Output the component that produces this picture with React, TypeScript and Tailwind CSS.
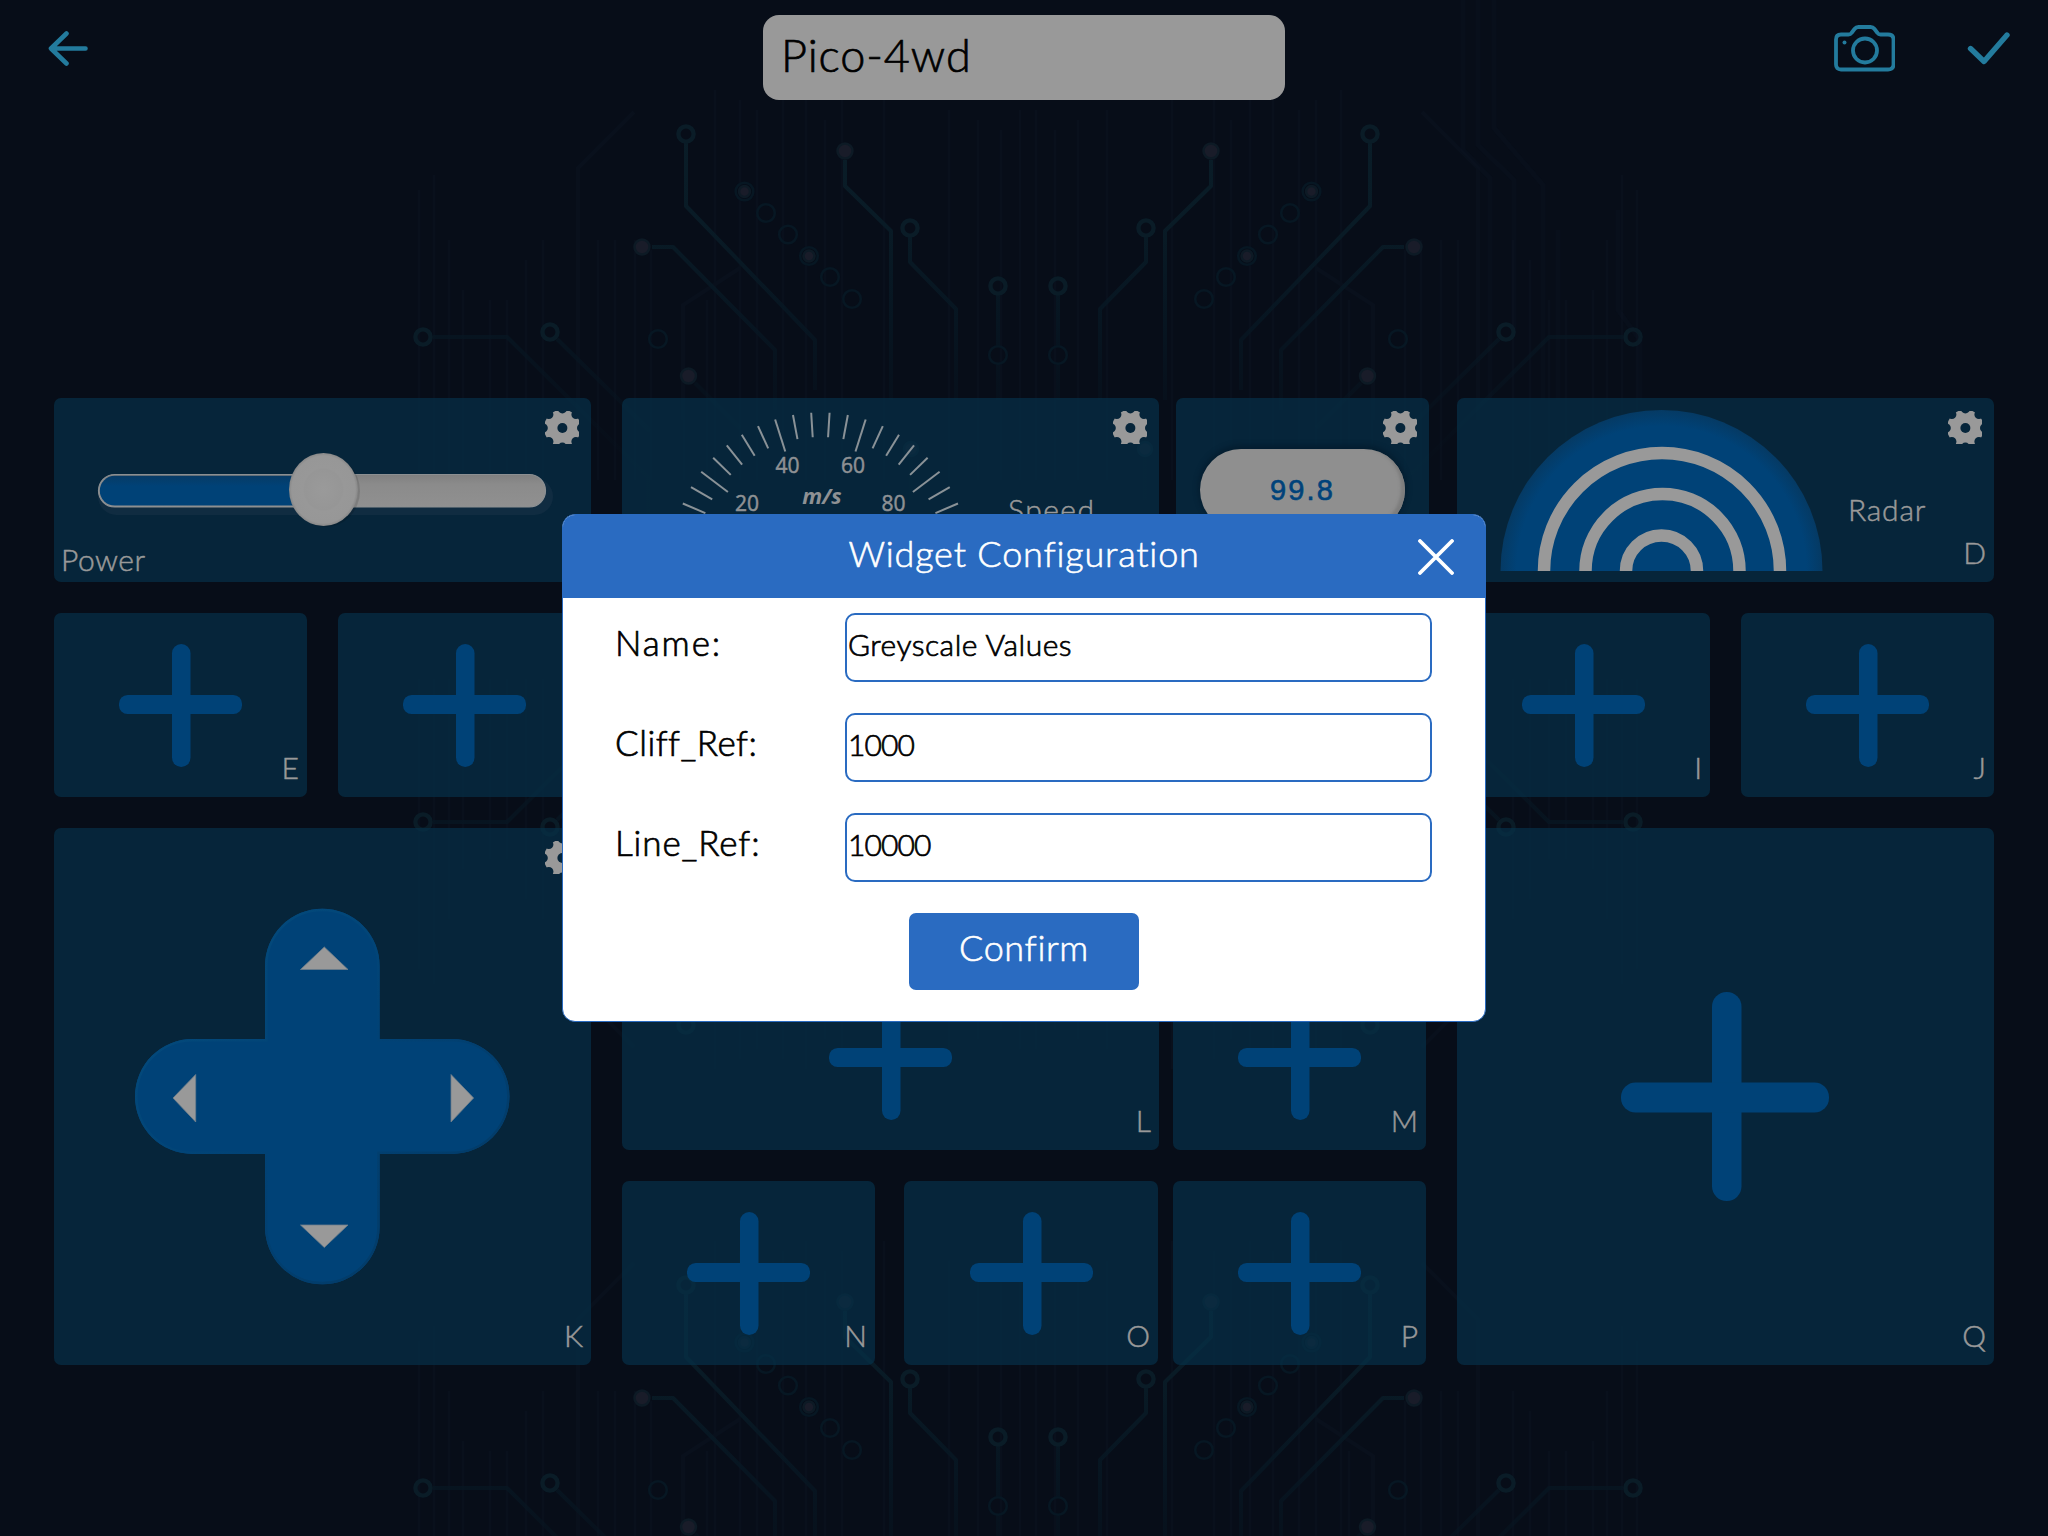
import React from "react";

const FONT = "font-['Lato','Liberation_Sans',sans-serif]";

/* ---------- background circuit board ---------- */

const traces = [
  "M686 143V206L815 340V390",
  "M845 160V186L891 231V400",
  "M910 237V262L956 309V400",
  "M998 295V346M998 364V400",
  "M652 247H673L775 350V410",
  "M433 337H507L648 477V560",
  "M557 339L617 398L650 431",
  "M695 383L740 428",
  "M911 458V500",
];
const rings: [number, number][] = [
  [686, 134], [910, 228], [998, 286], [423, 337], [550, 332],
];
const dimRings: [number, number][] = [
  [744.5, 191.5], [766, 213], [788, 234.5], [809, 256], [830, 277], [852, 299], [658, 339], [998, 355],
];
const dots: [number, number, number][] = [
  [845, 151, 7.5], [642, 247, 7.5], [688.5, 376, 7.5], [744.5, 191.5, 5.5], [809, 256, 5.5], [911, 449, 7],
];
const streaks: [number, number][] = [
  [419, 190], [434, 175], [449, 240], [463, 290], [490, 300], [507, 300], [526, 260], [543, 240], [598, 240],
  [615, 240], [635, 240], [651, 250], [684, 310], [707, 300], [715, 90], [740, 100], [757, 110], [783, 100],
  [806, 90], [825, 120], [842, 100], [884, 90], [949, 110], [978, 120], [1001, 130], [1020, 110],
];

function CircuitQuarter() {
  return (
    <g id="quarter" fill="none">
      <g stroke="#101c2c" strokeWidth="2.5" opacity="0.22">
        {streaks.map(([x, y]) => (
          <path key={x} d={`M${x} ${y}V480`} />
        ))}
        <path d="M634 112L578 168V420M740 268L683 305V420" strokeWidth="4" />
      </g>
      <g stroke="url(#traceFade)" strokeWidth="4" strokeLinejoin="round">
        {traces.map((d) => (
          <path key={d} d={d} />
        ))}
      </g>
      <g stroke="#0a1c27" strokeWidth="4.4">
        {rings.map(([x, y]) => (
          <circle key={`${x}-${y}`} cx={x} cy={y} r="7.6" />
        ))}
      </g>
      <g stroke="#071723" strokeWidth="2.6">
        {dimRings.map(([x, y]) => (
          <circle key={`${x}-${y}`} cx={x} cy={y} r="8.8" />
        ))}
      </g>
      <g fill="#191c29" stroke="#0d1a25" strokeWidth="2.5">
        {dots.map(([x, y, r]) => (
          <circle key={`${x}-${y}`} cx={x} cy={y} r={r} />
        ))}
      </g>
    </g>
  );
}

function Circuit() {
  return (
    <svg className="absolute inset-0" width="2048" height="1536" viewBox="0 0 2048 1536">
      <defs>
        <linearGradient id="traceFade" gradientUnits="userSpaceOnUse" x1="0" y1="120" x2="0" y2="460">
          <stop offset="0" stopColor="#0a1d28" />
          <stop offset="0.3" stopColor="#091b26" />
          <stop offset="0.6" stopColor="#071723" stopOpacity="0.8" />
          <stop offset="1" stopColor="#071420" stopOpacity="0.1" />
        </linearGradient>
        <CircuitQuarter />
        <g id="board">
          <use href="#quarter" />
          <use href="#quarter" transform="translate(2056 0) scale(-1 1)" />
        </g>
      </defs>
      <use href="#board" />
      <use href="#board" transform="translate(0 1159) scale(1 -1)" />
      <use href="#board" transform="translate(0 1151)" />
      <g fill="none" stroke="#0e1929" strokeWidth="5" opacity="0.2">
        <path d="M1463 0V150L1490 178V400M1478 0V145L1514 180V330M1494 0V128L1543 185V400M1558 230V400M1618 210V310L1640 340V400" />
      </g>
    </svg>
  );
}

/* ---------- widgets ---------- */

function Gear() {
  const notches = [0, 45, 90, 135, 180, 225, 270, 315];
  return (
    <svg className="absolute top-[13px] right-[12px]" width="34" height="33" viewBox="0 0 34 33">
      <defs>
        <mask id="gearMask" maskUnits="userSpaceOnUse" x="0" y="0" width="34" height="33">
          <circle cx="17.4" cy="17" r="18.4" fill="#fff" />
          {notches.map((a) => (
            <circle key={a} cx="17.4" cy="-2.2" r="4.6" fill="#000" transform={`rotate(${a} 17.4 17)`} />
          ))}
          <circle cx="17.4" cy="17" r="5" fill="#000" />
        </mask>
      </defs>
      <rect width="34" height="33" fill="#999999" mask="url(#gearMask)" />
    </svg>
  );
}

function Panel({
  className,
  label,
  gear,
  children,
}: {
  className: string;
  label?: string;
  gear?: boolean;
  children?: React.ReactNode;
}) {
  return (
    <div className={`relative flex shrink-0 items-center justify-center rounded-[7px] bg-[rgba(6,48,72,0.7)] ${className}`}>
      {children}
      {gear && <Gear />}
      {label && (
        <span className="absolute right-[8px] bottom-[12px] text-[30px] leading-[36px] font-light text-[#999] [-webkit-text-stroke:0.5px_#999]">
          {label}
        </span>
      )}
    </div>
  );
}

function Plus() {
  return (
    <svg width="123" height="123" viewBox="0 0 123 123" fill="#004277">
      <rect x="53" y="0" width="18.5" height="123" rx="9.2" />
      <rect x="0" y="51" width="123" height="19" rx="8.6" />
    </svg>
  );
}

function LargePlus() {
  return (
    <svg width="209" height="209" viewBox="0 0 209 209" fill="#004277">
      <rect x="91" y="0" width="29.5" height="209" rx="14.7" />
      <rect x="0" y="90.5" width="208" height="30" rx="14.5" />
    </svg>
  );
}

function Slider() {
  return (
    <svg className="absolute inset-0" width="537" height="184" viewBox="54 398 537 184">
      <defs>
        <linearGradient id="trackBlue" x1="0" y1="0" x2="0" y2="1">
          <stop offset="0" stopColor="#073b66" />
          <stop offset="0.35" stopColor="#004277" />
          <stop offset="1" stopColor="#004277" />
        </linearGradient>
        <linearGradient id="trackGrey" x1="0" y1="0" x2="0" y2="1">
          <stop offset="0" stopColor="#7f7f7f" />
          <stop offset="0.3" stopColor="#8b8b8b" />
          <stop offset="1" stopColor="#909090" />
        </linearGradient>
        <radialGradient id="knob">
          <stop offset="0" stopColor="#9a9a9a" />
          <stop offset="0.55" stopColor="#969696" />
          <stop offset="0.6" stopColor="#989898" />
          <stop offset="0.92" stopColor="#979797" />
          <stop offset="1" stopColor="#878787" />
        </radialGradient>
      </defs>
      <rect x="98" y="478" width="455" height="37" rx="18.500" fill="#102c41" />
      <rect x="98.500" y="474.500" width="447" height="32.500" rx="16.200" fill="url(#trackGrey)" stroke="#8b8f92" strokeWidth="1.200" />
      <rect x="99.800" y="475.800" width="225" height="29.800" rx="14.900" fill="url(#trackBlue)" />
      <ellipse cx="326" cy="491" rx="34" ry="36" fill="#000" opacity="0.12" />
      <ellipse cx="323.500" cy="489.500" rx="34.500" ry="36.500" fill="url(#knob)" />
    </svg>
  );
}

function Gauge() {
  const ticks = Array.from({ length: 26 }, (_, i) => i);
  const numbers: [string, number, number][] = [
    ["40", 787.5, 473],
    ["60", 853, 473],
    ["20", 747, 511],
    ["80", 893.6, 511],
  ];
  return (
    <svg className="absolute inset-0" width="537" height="184" viewBox="622 398 537 184">
      {ticks.map((i) => {
        const deg = (i - 12.5) * 7.05;
        const major = i % 5 === 0;
        return (
          <path
            key={i}
            d={`M820.4 412.500V${major ? 446 : 437}`}
            stroke="#8a9297"
            strokeWidth="2"
            transform={`rotate(${deg} 820.4 562)`}
          />
        );
      })}
      <g fill="#8e9194" textAnchor="middle" fontFamily="'Open Sans','Noto Sans',sans-serif">
        {numbers.map(([t, x, y]) => (
          <text key={t} x={x} y={y} fontSize="21" stroke="#8e9194" strokeWidth="0.500">
            {t}
          </text>
        ))}
        <text x="822" y="504" fontSize="22" fontWeight="700" fontStyle="italic">
          m/s
        </text>
      </g>
    </svg>
  );
}

function Radar() {
  return (
    <svg className="absolute inset-0" width="537" height="184" viewBox="1457 398 537 184">
      <defs>
        <radialGradient id="dome" gradientUnits="userSpaceOnUse" cx="1661.500" cy="571" r="161">
          <stop offset="0.9" stopColor="#004277" />
          <stop offset="1" stopColor="#053a64" />
        </radialGradient>
      </defs>
      <path d="M1500.500 571A161 161 0 0 1 1822.500 571Z" fill="url(#dome)" />
      <g fill="none" stroke="#999999" strokeWidth="12.500">
        <path d="M1544 571A118 118 0 0 1 1780 571" />
        <path d="M1585.500 571A77 77 0 0 1 1739.500 571" />
        <path d="M1626 571A35.500 35.500 0 0 1 1697 571" />
      </g>
    </svg>
  );
}

function DPad() {
  const body =
    "M265 1039V966A57.300 57.300 0 0 1 379.600 966V1039H452A57.500 57.500 0 0 1 452 1154H379.600V1227A57.300 57.300 0 0 1 265 1227V1154H192.500A57.500 57.500 0 0 1 192.500 1039Z";
  return (
    <svg className="absolute inset-0" width="537" height="537" viewBox="54 828 537 537">
      <defs>
        <linearGradient id="padEdge" x1="0" y1="0" x2="1" y2="1">
          <stop offset="0" stopColor="#044d7e" />
          <stop offset="0.5" stopColor="#014275" />
          <stop offset="1" stopColor="#033862" />
        </linearGradient>
        <clipPath id="padClip">
          <path d={body} />
        </clipPath>
      </defs>
      <path d={body} fill="#004277" />
      <path d={body} fill="none" stroke="url(#padEdge)" strokeWidth="5" clipPath="url(#padClip)" />
      <g fill="#999999" stroke="#6f7f8c" strokeWidth="0.800">
        <path d="M324.300 947L348 969.500H300.500Z" />
        <path d="M324.300 1247.500L300.500 1225H348Z" />
        <path d="M173 1098L195.700 1074.500V1122Z" />
        <path d="M473.600 1098L451 1074.500V1122Z" />
      </g>
    </svg>
  );
}

/* ---------- dialog ---------- */

function Field({ label, value, labelSpacing, valueSpacing }: { label: string; value: string; labelSpacing: string; valueSpacing: string }) {
  return (
    <div className="flex h-[69px]">
      <div
        className={`w-[230px] pt-[8px] text-[35px] leading-[42px] font-light whitespace-nowrap text-black [-webkit-text-stroke:0.7px_#000] ${labelSpacing}`}
      >
        {label}
      </div>
      <div
        className={`h-[69px] w-[587px] rounded-[10px] border-2 border-[#2a6bc1] pt-[11px] pl-[1px] text-[30px] leading-[36px] font-light text-black [-webkit-text-stroke:0.7px_#000] ${valueSpacing}`}
      >
        {value}
      </div>
    </div>
  );
}

function Dialog() {
  return (
    <div className="absolute top-[514px] left-[562px] flex h-[508px] w-[924px] flex-col overflow-hidden rounded-[13px] border border-[#2a6bc1] bg-white">
      <div className="relative flex h-[83px] shrink-0 justify-center bg-[#2a6bc1] pt-[17px]">
        <h1 className="text-[36px] leading-[43px] font-light tracking-[0.8px] whitespace-nowrap text-white [-webkit-text-stroke:0.6px_#fff]">
          Widget Configuration
        </h1>
        <svg className="absolute top-[24px] right-[31px]" width="36" height="36" viewBox="0 0 36 36">
          <path d="M2 2L34 34M34 2L2 34" stroke="#fff" strokeWidth="3.800" strokeLinecap="round" />
        </svg>
      </div>
      <div className="flex flex-col gap-[31px] pt-[15px] pl-[52px]">
        <Field label="Name:" value="Greyscale Values" labelSpacing="tracking-[1.9px]" valueSpacing="tracking-[0.5px]" />
        <Field label="Cliff_Ref:" value="1000" labelSpacing="tracking-[0.5px]" valueSpacing="tracking-[-0.9px]" />
        <Field label="Line_Ref:" value="10000" labelSpacing="tracking-[0.9px]" valueSpacing="tracking-[-0.9px]" />
      </div>
      <button className="mt-[31px] h-[77px] w-[230px] shrink-0 self-center rounded-[7px] bg-[#2a6bc1] pb-[8px] text-[36px] leading-[43px] font-light tracking-[0.6px] text-white [-webkit-text-stroke:0.6px_#fff]">
        Confirm
      </button>
    </div>
  );
}

/* ---------- screen ---------- */

export default function App() {
  return (
    <div className={`relative h-[1536px] w-[2048px] overflow-hidden bg-[#070d18] ${FONT}`}>
      <Circuit />

      <header className="relative flex h-[398px] items-start justify-between pr-[38px] pl-[48px]">
        <div className="flex w-[715px] pt-[30px]">
          <svg width="40" height="36" viewBox="0 0 40 36" fill="none" stroke="#237b9d" strokeWidth="4.600" strokeLinecap="round" strokeLinejoin="round">
            <path d="M37.500 18.500H3.500M18.500 3.500L3 18.500L18.500 33.500" />
          </svg>
        </div>
        <div className="mt-[15px] h-[85px] w-[522px] rounded-[16px] bg-[#999] pt-[12px] pl-[18px] text-[45px] leading-[56px] font-light tracking-[0.9px] text-black [-webkit-text-stroke:0.7px_#000]">
          Pico-4wd
        </div>
        <div className="flex w-[725px] justify-end gap-[72px] pt-[24px]">
          <svg width="61" height="48" viewBox="0 0 61 48" fill="none" stroke="#237b9d" strokeWidth="3.800" strokeLinejoin="round">
            <path d="M2 15.500Q2 10.500 7 10.500H14.500Q16.500 10.500 17.500 9L20.500 5Q22 3 24.500 3H36.500Q39 3 40.500 5L43.500 9Q44.500 10.500 46.500 10.500H54Q59.500 10.500 59.500 15.500V40.500Q59.500 45.500 54 45.500H7Q2 45.500 2 40.500Z" />
            <circle cx="31" cy="26.500" r="12" />
            <circle cx="10.500" cy="18.500" r="2" fill="#237b9d" stroke="none" />
          </svg>
          <svg className="mt-[6px] -mr-[1px]" width="44" height="36" viewBox="0 0 44 36" fill="none" stroke="#237b9d" strokeWidth="5.400" strokeLinecap="round" strokeLinejoin="round">
            <path d="M3.500 18.500L17 31.500L40 5" />
          </svg>
        </div>
      </header>

      <main className="relative flex justify-between px-[54px]">
        <section className="flex w-[537px] flex-col gap-[31px]">
          <Panel className="h-[184px] w-[537px]" gear label="A">
            <Slider />
            <span className="absolute bottom-[5px] left-[7px] text-[30px] leading-[36px] font-light tracking-[0.5px] text-[#999] [-webkit-text-stroke:0.5px_#999]">
              Power
            </span>
          </Panel>
          <div className="flex justify-between">
            <Panel className="h-[184px] w-[253px]" label="E"><Plus /></Panel>
            <Panel className="h-[184px] w-[253px]"><Plus /></Panel>
          </div>
          <Panel className="h-[537px] w-[537px]" gear label="K">
            <DPad />
          </Panel>
        </section>

        <section className="-mr-[3px] flex w-[807px] flex-col gap-[31px]">
          <div className="flex justify-between">
            <Panel className="h-[184px] w-[537px]" gear>
              <Gauge />
              <span className="absolute top-[93px] left-[386px] text-[30px] leading-[36px] font-light tracking-[1.5px] text-[#999] [-webkit-text-stroke:0.5px_#999]">
                Speed
              </span>
            </Panel>
            <Panel className="h-[184px] w-[253px]" gear>
              <div className="flex h-[82px] w-[205px] items-center justify-center rounded-full bg-[#8f8f8f] font-['Liberation_Sans',sans-serif] text-[29px] leading-none tracking-[2.2px] text-[#00427a] shadow-[inset_-4px_-2px_3px_#7d7d7d,0_-2px_5px_2px_rgba(3,25,42,0.6)] [-webkit-text-stroke:0.600px_#00427a]">
                99.8
              </div>
            </Panel>
          </div>
          <Panel className="h-[322px] w-[807px]" />
          <div className="flex gap-[14px]">
            <Panel className="h-[184px] w-[537px]" label="L"><Plus /></Panel>
            <Panel className="h-[184px] w-[253px]" label="M"><Plus /></Panel>
          </div>
          <div className="flex">
            <Panel className="h-[184px] w-[253px]" label="N"><Plus /></Panel>
            <Panel className="ml-[29px] h-[184px] w-[254px]" label="O"><Plus /></Panel>
            <Panel className="ml-[15px] h-[184px] w-[253px]" label="P"><Plus /></Panel>
          </div>
        </section>

        <section className="flex w-[537px] flex-col gap-[31px]">
          <Panel className="h-[184px] w-[537px]" gear label="D">
            <Radar />
            <span className="absolute top-[93px] left-[391px] text-[30px] leading-[36px] font-light tracking-[0.8px] text-[#999] [-webkit-text-stroke:0.5px_#999]">
              Radar
            </span>
          </Panel>
          <div className="flex justify-between">
            <Panel className="h-[184px] w-[253px]" label="I"><Plus /></Panel>
            <Panel className="h-[184px] w-[253px]" label="J"><Plus /></Panel>
          </div>
          <Panel className="h-[537px] w-[537px]" label="Q"><LargePlus /></Panel>
        </section>
      </main>

      <Dialog />
    </div>
  );
}
